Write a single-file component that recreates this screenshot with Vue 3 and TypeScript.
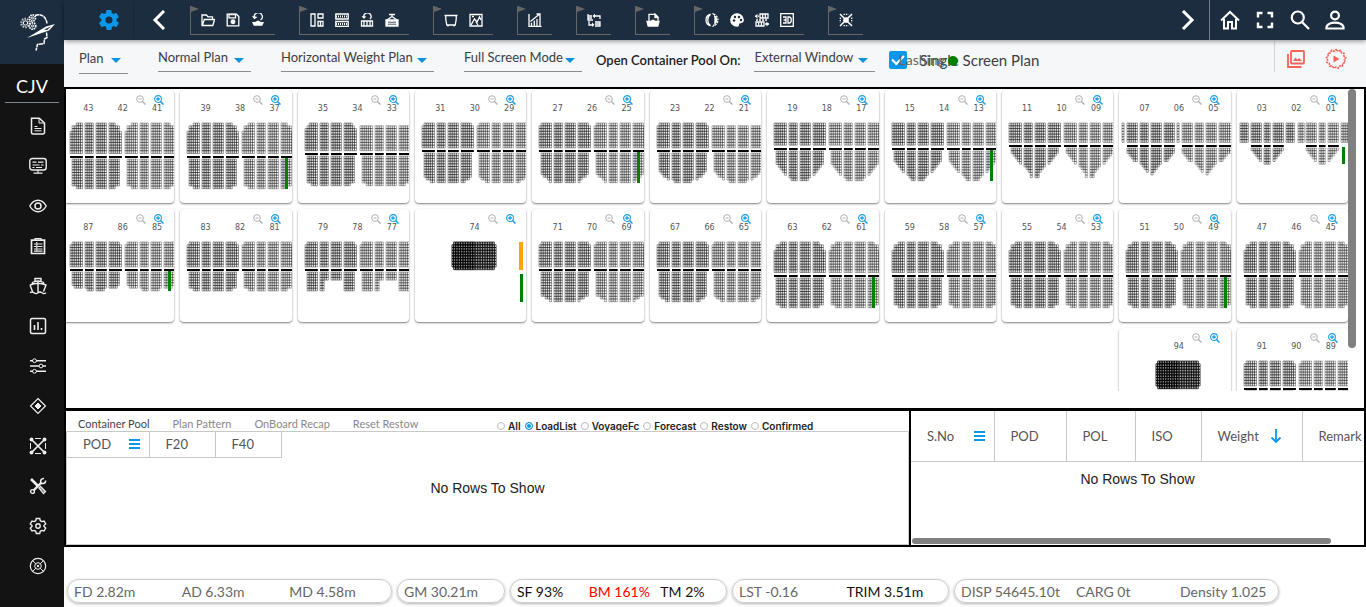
<script setup lang="ts">
import { ref } from 'vue'

const icons: Record<string, string> = {
  folder: '<path d="M1 12.5V2h4.5l1.5 1.8h4.5V6M1.3 12.5 3.3 6.5H13.6L11.8 12.5Z"/>',
  save: '<path d="M1.2 1.2h9.3l2.3 2.3v9.3H1.2Z"/><path d="M3 1.5h6.5v3.3H3Z"/><circle cx="7" cy="8.8" r="1.8" fill="currentColor"/>',
  undoHull: '<path d="M3.5 5A4 4 0 1 1 9.5 7"/><path d="M1 3l2.3 3.3L6.5 4Z" fill="currentColor" stroke="none"/><path d="M1 9h3l3-1.6L10 9h3l-1.8 3.8H2.8Z" fill="currentColor" stroke="none"/>',
  board: '<path d="M1 1h4v12H1ZM8 1h5v4H8ZM8 8.3h5V13H8ZM10.5 8v5"/>',
  rows: '<path d="M.8 1h12.4v5H.8ZM.8 8.5h12.4v5H.8Z"/><path d="M1 3.5h12M1 11h12" stroke-width="2" stroke-dasharray="1 1"/>',
  undoGrid: '<path d="M4 4.5A3.6 3.6 0 1 1 10 6"/><path d="M1.5 3l2.5 3L6.3 3.5Z" fill="currentColor" stroke="none"/><path d="M1.5 8h11v5h-11ZM4 8v5M7 8v5M10 8v5"/>',
  crane: '<path d="M4 1.500h6M7 1.500v3M2 7l5-3.500L12 7"/><path d="M1 7h12v6H1Z" fill="currentColor"/><path d="M3 9.2h8M3 11.2h8" stroke="#1c2d3f" stroke-width=".8"/>',
  tank: '<path d="M.5 2.500h13M1.800 2.500v4l1 5.500h8.400l1-5.500v-4M4 12v1.500M10 12v1.500"/>',
  picture: '<path d="M1 1.5h12v11.5H1Z"/><path d="m2 12 3.500-6L8 9l2.500-5L12 7M3 3.500h2M9 12l-2-3"/>',
  chart: '<path d="M1 1v12.3h12.5M3.5 13V9.8M6.3 13V7.8M9 13V6M12 13V3M2.5 8.5l8.5-7M8.5 1H12v3"/>',
  swap: '<path d="M1 1v6h5M1 3h4M1 5h4M8 3h5v3M8 9h5v4H8M8 11h5M2 8v4h4"/><path d="M8 .8v4.5L5.5 3ZM5 9.5V14l2.5-2.2Z" fill="currentColor" stroke="none"/>',
  shipFile: '<path d="M3 8V1.3h6L12 4v4"/><path d="M9 1v3.5h3Z" fill="currentColor"/><path d="M1 8.5h3l3-1.2 3 1.2h3L11.8 13H2.2Z" fill="currentColor"/>',
  half: '<path d="M5.5 1.2A6 6 0 0 0 5.5 12.8 7.5 7.5 0 0 1 5.5 1.2Z"/><path d="M8.5 1.2a6 6 0 0 1 0 11.6A10 10 0 0 0 8.5 1.2Z" stroke-dasharray="2 1"/><path d="M9.5 2.5a5 5 0 0 1 0 9Z" fill="currentColor" stroke="none"/>',
  palette: '<path d="M7 .8a6.2 6.2 0 1 0 0 12.4c2.5 0 .5-2.3 2-3.2s4.2.2 4.2-3A6.2 6.2 0 0 0 7 .8Z" fill="currentColor"/><g fill="#1c2d3f" stroke="none"><circle cx="4" cy="7.5" r="1.2"/><circle cx="5" cy="4" r="1.2"/><circle cx="9" cy="4" r="1.2"/><circle cx="11" cy="7" r="1.2"/></g>',
  exchange: '<path d="M5 1h8v4H5ZM1 9h8v4H1ZM7.6 1v4M10.3 1v4M3.6 9v4M6.4 9v4" stroke-width="1.3"/><path d="M0 3.2h4M10 11h4M1 7h12" stroke-dasharray="2 1"/><path d="M2.5.7v5L0 3.2ZM11.5 8.5v5L14 11Z" fill="currentColor" stroke="none"/>',
  threeD: '<path d="M.7 .7h12.6v12.6H.7Z"/><path d="M3 4h3v6H3M3.6 7H6M8 4h1.8l1.4 1.5v3L9.8 10H8Z"/>',
  lash: '<path d="m1 1 12 12M13 1 1 13" stroke-width="1.6"/><path d="M4.5 1.3h5M4.5 12.7h5M1.3 4.5v5M12.7 4.5v5" stroke-dasharray="1.4 1"/><circle cx="7" cy="7" r="2.2" fill="currentColor"/>',
  file: '<path d="M2.5 1.2h7.8L15.5 6v9.5a1.5 1.5 0 0 1-1.5 1.5H4a1.5 1.5 0 0 1-1.5-1.5Z" stroke-width="1.5"/><path d="M10 1.5V6h5.3M5.500 9.500h3M5.500 11.500h7M5.500 13.800h7"/>',
  monitor: '<rect x=".8" y="1.5" width="16.4" height="11.5" rx="2.5" stroke-width="1.4"/><path d="M3.5 5.2h4M9 5.2h5.5M3.5 8h7M12 8h2.5M3.5 10.5h2M7 10.5h6M9 13v2.8M4.5 16.2h9" stroke-width="1.2"/>',
  eye: '<path d="M.8 9C3 5 5.8 3.2 9 3.2S15 5 17.2 9C15 13 12.2 14.8 9 14.8S3 13 .8 9Z" stroke-width="1.4"/><circle cx="9" cy="9" r="3" stroke-width="1.5"/>',
  clipboard: '<path d="M2.5 3.2h13V16.5h-13Z" stroke-width="1.7"/><path d="M6 3V1.5h6V3M5 7h2M8.5 7h5M5 9.5h2M8.5 9.5h5M5 12h2M8.5 12h5M5 14.2h2M8.5 14.2h5M7.8 5v10" stroke-width="1.2"/>',
  ship: '<path d="M6 4V1.5h6V4M3.5 7V5.5Q9 2.5 14.5 5.5V7M1 8q8-3.5 16 0l-2.5 6.5M1 8l2.5 6.5M9 4.500V15M1 15.800q2-1.600 4 0t4 0 4 0 4 0" stroke-width="1.4"/>',
  bars: '<rect x="1.5" y="1.5" width="15" height="15" rx="1.5" stroke-width="1.5"/><path d="M5.5 13V8M9 13V5M12.5 13v-2" stroke-width="1.6"/>',
  sliders: '<path d="M1 3.7h3M7 3.7h10M1 9h9M14 9h3M1 14.3h3M7 14.3h10" stroke-width="1.4"/><circle cx="5.5" cy="3.7" r="1.9"/><circle cx="12" cy="9" r="1.9"/><circle cx="5.5" cy="14.3" r="1.9"/>',
  diamond: '<path d="M9 1.5 16.5 9 9 16.5 1.5 9Z" stroke-width="1.2"/><path d="M9 6 12 9 9 12 6 9Z" fill="currentColor"/>',
  cross: '<path d="m3 3 12 12M15 3 3 15" stroke-width="1.7"/><path d="M6 1.5h6M6 16.5h6M1.5 6v6M16.5 6v6"/><g fill="currentColor" stroke="none"><circle cx="2.5" cy="2.5" r="1.9"/><circle cx="15.5" cy="2.5" r="1.9"/><circle cx="2.5" cy="15.5" r="1.9"/><circle cx="15.5" cy="15.5" r="1.9"/></g>',
  tools: '<path d="m2 2 7 7" stroke-width="2.6"/><path d="m4.5 13.5 8-8" stroke-width="2.4"/><path d="M12 6a3 3 0 0 1 3-4.5M12 6a3 3 0 0 0 4.7-2.5" stroke-width="1.6"/><circle cx="3.5" cy="14.5" r="1.9" stroke-width="1.4"/><path d="m10 11 1.5-1.5 5 5L14.5 16.5Z" stroke-width="1.3"/><path d="m11.5 11 4 4"/>',
  cog: '<path d="M7.3 1.5h3.4l.6 2.2 1.5.9 2.2-.6 1.700 2.900L15 8.500v1l1.700 1.600L15 14l-2.200-.6-1.500.9-.6 2.200H7.300l-.6-2.200-1.500-.9L3 14l-1.700-2.900L3 9.500v-1L1.300 6.900 3 4l2.200.6 1.500-.9Z" stroke-width="1.400"/><circle cx="9" cy="9" r="2.2" stroke-width="1.4"/>',
  wheel: '<circle cx="9" cy="9" r="7.7" stroke-width="1.2"/><circle cx="9" cy="9" r="3.3"/><path d="m3.800 3.800 3 3M14.200 3.800l-3 3M3.800 14.200l3-3M14.200 14.200l-3-3M7.700 7.700l2.600 2.600M10.300 7.700l-2.600 2.600"/>',
}

const toolGroups = [
  ['folder', 'save', 'undoHull'],
  ['board', 'rows', 'undoGrid', 'crane'],
  ['tank', 'picture'],
  ['chart'],
  ['swap'],
  ['shipFile'],
  ['half', 'palette', 'exchange', 'threeD'],
  ['lash'],
]
const sideIcons = ['file', 'monitor', 'eye', 'clipboard', 'ship', 'bars', 'sliders', 'diamond', 'cross', 'tools', 'cog', 'wheel']

const selects = [
  { id: 'mode', label: 'Plan', cls: 'w-plan' },
  { id: 'pattern', label: 'Normal Plan', cls: 'w-normal' },
  { id: 'weight', label: 'Horizontal Weight Plan', cls: 'w-weight' },
  { id: 'screen', label: 'Full Screen Mode', cls: 'w-screen' },
]

/* Stowage drawing: groups are [x, columns, has hatch]; depths list hold rows per column from the side inwards. */
type Group = [number, number, boolean]
interface Bay {
  labels: string[]
  deck: number
  cut?: number[]
  depths: number[]
  groups?: Group[][]
  raised?: boolean
  bar?: boolean
  block?: boolean
  orange?: boolean
  start?: boolean
}
const CW = 2.08
const CH = 2.77
const HOLD = 2.7
const TOP = 33

const wide: Group[][] = [
  [[7, 6, true], [22, 4, true], [33, 5, true], [46, 6, true]],
  [[62, 6, true], [77, 4, true], [88, 5, true], [101, 6, true]],
]
const bow: Group[][] = [
  [[3, 1, false], [8, 5, true], [21, 4, true], [32, 5, true], [45, 5, true], [58, 1, false]],
  [[63, 5, true], [76, 4, true], [87, 5, true], [100, 6, true]],
]
const tip: Group[][] = [
  [[3, 4, false], [14, 5, true], [27, 3, true], [36, 5, true], [49, 4, false]],
  [[61, 3, false], [69, 5, true], [82, 3, true], [91, 5, true], [104, 4, false]],
]
const box = [0, 10, 10, 11, 11, 11, 11, 11, 11, 11, 11]
const low = [0, 6, 6, 7, 7, 7, 7, 7, 7, 7, 7]
const big = [3, 1, 1]

const bays: Bay[] = [
  { labels: ['43', '42', '41'], deck: 11, cut: big, depths: box },
  { labels: ['39', '38', '37'], deck: 11, cut: big, depths: box, bar: true },
  { labels: ['35', '34', '33'], deck: 10, cut: [2, 1], depths: box, raised: true },
  { labels: ['31', '30', '29'], deck: 9, cut: [1], depths: [0, 9, 10, 10, 11, 11, 11, 11, 11, 11, 11] },
  { labels: ['27', '26', '25'], deck: 9, cut: [1], depths: [0, 8, 9, 9, 10, 11, 11, 11, 11, 11, 11], bar: true },
  { labels: ['23', '22', '21'], deck: 9, cut: [1], depths: [0, 7, 8, 9, 9, 10, 10, 11, 11, 11, 11], raised: true },
  { labels: ['19', '18', '17'], deck: 8, depths: [0, 5, 6, 7, 8, 9, 10, 11, 11, 11, 11] },
  { labels: ['15', '14', '13'], deck: 8, depths: [0, 4, 5, 6, 7, 8, 9, 10, 11, 11, 11], bar: true },
  { labels: ['11', '10', '09'], deck: 7, depths: [0, 2, 3, 4, 5, 6, 7, 8, 9, 11, 11] },
  { labels: ['07', '06', '05'], deck: 7, groups: bow, depths: [2, 3, 4, 5, 5, 6, 7, 8, 9, 10] },
  { labels: ['03', '02', '01'], deck: 7, groups: tip, depths: [1, 2, 3, 4, 5, 6, 6], bar: true },
  { labels: ['87', '86', '85'], deck: 9, cut: [1], depths: [0, 5, 6, 6, 6, 6, 6, 7, 7, 7, 7], bar: true },
  { labels: ['83', '82', '81'], deck: 9, cut: [1], depths: low },
  { labels: ['79', '78', '77'], deck: 9, cut: [1], depths: [0, 7, 7, 7, 7, 7, 7, 7, 3, 3, 3, 3, 3, 3, 3, 7, 7, 7, 7, 7, 0] },
  { labels: ['74'], deck: 10, depths: [], block: true, orange: true },
  { labels: ['71', '70', '69'], deck: 9, cut: [1], depths: [0, 9, 9, 10, 10, 11, 11, 11, 11, 11, 11] },
  { labels: ['67', '66', '65'], deck: 9, cut: [1], depths: [0, 9, 10, 10, 11, 11, 11, 11, 11, 11, 11] },
  { labels: ['63', '62', '61'], deck: 11, cut: big, depths: box, bar: true },
  { labels: ['59', '58', '57'], deck: 11, cut: big, depths: box },
  { labels: ['55', '54', '53'], deck: 11, cut: big, depths: box },
  { labels: ['51', '50', '49'], deck: 11, cut: big, depths: box, bar: true },
  { labels: ['47', '46', '45'], deck: 11, cut: big, depths: box },
  { labels: ['94'], deck: 10, depths: [], block: true, start: true },
  { labels: ['91', '90', '89'], deck: 9, cut: [1], depths: low },
]

function cell(x: number, y: number, w = CW, h = CH): string {
  return `M${x.toFixed(2)} ${y.toFixed(2)}h${w}v${h}h${-w}z`
}

function drawBay(b: Bay) {
  const paths = ['', '']
  const hatches: { x: number; w: number }[] = []
  if (b.block) {
    for (let side = 0; side < 2; side++) {
      for (let c = 0; c < 13; c++) {
        const edge = side === 0 ? c : 12 - c
        const skip = edge < 1 ? 1 : 0
        for (let r = skip; r < 10 - skip; r++) paths[side] += cell(37 + side * 22 + c * 1.7, TOP + r * CH, 1.7)
      }
    }
    return { paths, hatches, hatchY: 0, barY: 65, barH: 28 }
  }
  const hatchY = Math.round(TOP + b.deck * CH + 2.4)
  const groupSets = b.groups ?? wide
  groupSets.forEach((groups, side) => {
    const mirror = groupSets[0]
    const total = groups.reduce((n, g) => n + g[1], 0)
    const holdTotal = mirror.filter(g => g[2]).reduce((n, g) => n + g[1], 0)
    let i = 0
    let h = 0
    for (const [x, n, hatch] of groups) {
      if (hatch) hatches.push({ x, w: n * CW + 0.4 })
      for (let c = 0; c < n; c++) {
        const edge = Math.min(i, total - 1 - i)
        const skip = side === 1 && b.raised ? 1 : b.cut?.[edge] ?? 0
        for (let r = skip; r < b.deck; r++) paths[side] += cell(x + c * CW, TOP + r * CH)
        if (hatch) {
          const k = b.depths.length > 20 ? h : Math.max(0, Math.min(h, holdTotal - 1 - h))
          const depth = b.depths[Math.min(k, b.depths.length - 1)]
          for (let r = 0; r < depth; r++) paths[side] += cell(x + c * CW, hatchY + 3 + r * HOLD, CW, HOLD)
          h++
        }
        i++
      }
    }
  })
  return { paths, hatches, hatchY, barY: hatchY + 2, barH: Math.round(Math.max(...b.depths) * HOLD) + 1 }
}
const cards = bays.map(b => ({ ...b, art: drawBay(b) }))

const tabs = ['Container Pool', 'Plan Pattern', 'OnBoard Recap', 'Reset Restow']
const filters = ['All', 'LoadList', 'VoyageFc', 'Forecast', 'Restow', 'Confirmed']
const filter = ref('LoadList')
const single = ref(true)

const stats = [
  { cls: 'three', items: [['FD 2.82m', ''], ['AD 6.33m', ''], ['MD 4.58m', '']] },
  { cls: 'one', items: [['GM 30.21m', '']] },
  { cls: 'tight', items: [['SF 93%', 'dark'], ['BM 161%', 'red'], ['TM 2%', 'dark']] },
  { cls: 'two', items: [['LST -0.16', ''], ['TRIM 3.51m', 'dark']] },
  { cls: 'last', items: [['DISP 54645.10t', ''], ['CARG 0t', ''], ['Density 1.025', '']] },
]
</script>

<template>
  <div class="app">
    <aside class="side">
      <div class="logo">
        <svg width="38" height="40" viewBox="0 0 38 40" fill="none" stroke="#fff" aria-hidden="true">
          <circle cx="6.500" cy="11" r="4.200" stroke="#bbb" stroke-width="2.200" stroke-dasharray="1.600 1" />
          <circle cx="6.500" cy="11" r="2.200" />
          <circle cx="13.500" cy="6" r="3" stroke-width="1.800" stroke-dasharray="1.500 .8" />
          <circle cx="13.500" cy="14" r="3.200" stroke-width="1.800" stroke-dasharray="1.500 .8" />
          <circle cx="13.500" cy="6" r="1" /><circle cx="13.500" cy="14" r="1" />
          <path d="M16 3.500c6-2.500 11 1 12 8M27.500 20.500l.5 5-2.500 1.500-.5 4.500-6.500 1-1.500 6" stroke-width="1.500" stroke-dasharray="4 .5" />
          <path d="M8 26 27 14.500l9-2.500-6 6.500Z" fill="#fff" stroke="none" />
          <path d="M25 17.500l7-3-4 3.500Z" fill="#1c2d3f" stroke="none" />
        </svg>
      </div>
      <h1>CJV</h1>
      <nav>
        <button v-for="n in sideIcons" :key="n" type="button" :aria-label="n">
          <svg width="18" height="18" viewBox="0 0 18 18" fill="none" stroke="currentColor" v-html="icons[n]"></svg>
        </button>
      </nav>
    </aside>

    <main>
      <header>
        <button class="gear" type="button" aria-label="Settings">
          <svg width="24" height="24" viewBox="0 0 24 24" fill="currentColor"><path d="M19.400 13c.1-.3.100-.7.100-1s0-.7-.1-1l2.100-1.600c.2-.2.300-.4.100-.7l-2-3.400c-.1-.2-.4-.3-.6-.2l-2.500 1a7 7 0 0 0-1.700-1l-.4-2.600c0-.3-.2-.5-.5-.5h-4c-.2 0-.5.2-.5.400l-.4 2.700a7 7 0 0 0-1.700 1l-2.500-1c-.2-.1-.5 0-.6.2l-2 3.400c-.1.2 0 .5.100.700L4.500 11a8 8 0 0 0 0 2l-2.100 1.600c-.2.200-.2.400-.1.700l2 3.400c.1.200.400.3.600.2l2.500-1c.5.4 1.100.7 1.700 1l.4 2.600c0 .300.2.500.5.500h4c.200 0 .5-.2.500-.4l.4-2.700a7 7 0 0 0 1.700-1l2.500 1c.2.100.5 0 .6-.2l2-3.400c.1-.2.1-.5-.1-.7ZM12 15.500a3.500 3.500 0 1 1 0-7 3.500 3.500 0 0 1 0 7Z" /></svg>
        </button>
        <button class="prev" type="button" aria-label="Previous">
          <svg width="14" height="20" viewBox="0 0 14 20" fill="none" stroke="currentColor" stroke-width="3"><path d="M12 1 3 10l9 9" /></svg>
        </button>
        <div class="tools">
          <div v-for="(g, i) in toolGroups" :key="i" class="group">
            <button v-for="n in g" :key="n" type="button" :aria-label="n">
              <svg width="14" height="14" viewBox="0 0 14 14" fill="none" stroke="currentColor" stroke-width="1.300" v-html="icons[n]"></svg>
            </button>
          </div>
        </div>
        <button class="next" type="button" aria-label="Next">
          <svg width="14" height="20" viewBox="0 0 14 20" fill="none" stroke="currentColor" stroke-width="3"><path d="m2 1 9 9-9 9" /></svg>
        </button>
        <div class="account">
          <button type="button" aria-label="Home"><svg width="20" height="20" viewBox="0 0 20 20" fill="none" stroke="currentColor" stroke-width="2"><path d="M1 10.500 10 2l9 8.500M4 9v9.500h4V12h4v6.500h4V9" /></svg></button>
          <button type="button" aria-label="Full screen"><svg width="20" height="20" viewBox="0 0 20 20" fill="none" stroke="currentColor" stroke-width="2.400"><path d="M3 7.500V3h4.500M12.500 3H17v4.500M17 12.500V17h-4.500M7.500 17H3v-4.500" /></svg></button>
          <button type="button" aria-label="Search"><svg width="20" height="20" viewBox="0 0 20 20" fill="none" stroke="currentColor" stroke-width="2.200"><circle cx="7.800" cy="7.500" r="6" /><path d="m12 12 7 7" /></svg></button>
          <button type="button" aria-label="User"><svg width="20" height="20" viewBox="0 0 20 20" fill="none" stroke="currentColor" stroke-width="2.200"><circle cx="10" cy="5.500" r="3.900" /><path d="M1.500 18.500v-1.800q2-4 8.500-4t8.500 4v1.800Z" /></svg></button>
        </div>
      </header>

      <section class="options">
        <div class="selects">
          <div v-for="s in selects" :key="s.id" class="pick" :class="s.cls">
            <select :id="s.id" :aria-label="s.label"><option>{{ s.label }}</option></select>
          </div>
        </div>
        <label class="pool-on" for="pool">Open Container Pool On:</label>
        <div class="pick w-window">
          <select id="pool"><option>External Window</option></select>
        </div>
        <label class="check">
          <input v-model="single" type="checkbox">
          <span class="single">Single Screen Plan</span>
          <span class="lashing">Lashing<i></i></span>
        </label>
        <div class="actions">
          <button type="button" aria-label="Gallery"><svg width="20" height="20" viewBox="0 0 20 20" fill="none" stroke="currentColor" stroke-width="1.800"><rect x="5" y="2" width="13" height="12.500" rx="1" /><path d="M2 5v13h13.500" /><path d="m7 12 2.500-3.500 2 2.300L13 9l3 3Z" fill="currentColor" stroke="none" /></svg></button>
          <button type="button" aria-label="Run"><svg width="22" height="22" viewBox="0 0 22 22" fill="none" stroke="currentColor"><path d="M11 1.500 13 3.300l2.500-1 1 2.500 2.600.5-.3 2.700 2 1.700-1.500 2.100.9 2.500-2.500 1.100-.3 2.700-2.700-.1-1.500 2.200L11 19l-2.200 1.200-1.500-2.200-2.700.1-.3-2.700-2.500-1.100.9-2.500L1.200 9.700l2-1.700-.3-2.700 2.600-.5 1-2.500 2.500 1Z" stroke-width="1.500" stroke-dasharray="2.400 .7" /><path d="m8.500 7.500 6 3.500-6 3.500Z" fill="currentColor" stroke="none" /></svg></button>
        </div>
      </section>

      <section class="plan">
        <div class="scroller">
          <div class="grid">
            <article v-for="c in cards" :key="c.labels[0]" class="card" :class="{ start: c.start }">
              <div class="zoom">
                <button type="button" aria-label="Zoom out"><svg width="10" height="10" viewBox="0 0 12 12" fill="none" stroke="#b0b0b0" stroke-width="1.200"><circle cx="4.800" cy="4.800" r="4" /><path d="M3 4.800h3.600" /><path d="m7.800 7.800 3.600 3.600" stroke-width="1.600" /></svg></button>
                <button type="button" aria-label="Zoom in"><svg width="10" height="10" viewBox="0 0 12 12" fill="none" stroke="#1a9fe6" stroke-width="1.300"><circle cx="4.800" cy="4.800" r="4.100" /><path d="M2.600 4.800H7M4.800 2.600V7" stroke-width="1.700" /><path d="m7.800 7.800 3.600 3.600" stroke-width="1.900" /></svg></button>
              </div>
              <div class="nums" :class="{ lone: c.block }"><span v-for="l in c.labels" :key="l">{{ l }}</span></div>
              <svg class="art" width="112" height="113" viewBox="0 0 112 113" fill="none" aria-hidden="true">
                <path :d="c.art.paths[0]" class="cells" :class="{ dense: c.block }" />
                <path :d="c.art.paths[1]" class="cells light" :class="{ dense: c.block }" />
                <rect v-for="(h, i) in c.art.hatches" :key="i" :x="h.x" :y="c.art.hatchY" :width="h.w" height="2" fill="#000" />
                <rect v-if="c.orange" x="104" y="33" width="4" height="28" fill="#ffa500" />
                <rect v-if="c.bar || c.orange" x="105" :y="c.art.barY" width="3" :height="c.art.barH" fill="#008000" />
              </svg>
            </article>
          </div>
        </div>
        <div class="track"></div>
      </section>

      <section class="panels">
        <div class="pool">
          <div class="pool-head">
            <div class="tabs">
              <button v-for="(t, i) in tabs" :key="t" type="button" :class="{ on: i === 0 }">{{ t }}</button>
            </div>
            <div class="filters">
              <label v-for="f in filters" :key="f"><input v-model="filter" type="radio" name="filter" :value="f">{{ f }}</label>
            </div>
          </div>
          <div class="pool-body">
            <table>
              <thead><tr>
                <th class="c-pod"><div>POD<i class="menu"></i></div></th><th>F20</th><th>F40</th>
              </tr></thead>
            </table>
            <p class="empty">No Rows To Show</p>
          </div>
        </div>
        <div class="list">
          <div class="list-scroll">
            <table>
              <thead><tr>
                <th class="c-no"><div>S.No<i class="menu"></i></div></th>
                <th class="c-72">POD</th>
                <th class="c-69">POL</th>
                <th class="c-66">ISO</th>
                <th class="c-weight"><div>Weight<svg width="12" height="16" viewBox="0 0 12 16" fill="none" stroke="#0b98e8" stroke-width="1.800"><path d="M6 1v13M1.500 9.500 6 14l4.500-4.500" /></svg></div></th>
                <th class="c-remark">Remark</th>
              </tr></thead>
            </table>
          </div>
          <p class="empty">No Rows To Show</p>
          <div class="hthumb"></div>
        </div>
      </section>

      <footer>
        <div v-for="(s, i) in stats" :key="i" class="pill" :class="s.cls">
          <span v-for="it in s.items" :key="it[0]" :class="it[1]">{{ it[0] }}</span>
        </div>
      </footer>
    </main>
  </div>
</template>

<style>
body { margin: 0; overflow: hidden; }
</style>

<style scoped>
.app { display: flex; min-height: 100vh; background: #fff; font-family: Lato, "Open Sans", sans-serif; font-size: 14px; color: #555; }
button { padding: 0; border: 0; background: none; color: inherit; font: inherit; display: flex; align-items: center; justify-content: center; cursor: pointer; }
svg { display: block; flex: none; }

.side { width: 64px; flex: none; background: #131313; color: #fff; }
.logo { height: 64px; background: #1c2d3f; display: flex; align-items: center; justify-content: center; padding-left: 12px; box-sizing: border-box; }
h1 { margin: 0 5px; height: 38px; line-height: 44px; border-bottom: 1px solid #79838c; font-size: 18px; font-weight: 400; text-align: center; }
nav { padding: 3px 0 0 12px; display: flex; flex-direction: column; align-items: center; }
nav button { height: 40px; width: 40px; color: #eee; }

main { flex: 1; min-width: 0; display: flex; flex-direction: column; }
header { height: 40px; flex: none; display: flex; align-items: center; background: #1c2d3f; color: #fff; position: relative; box-shadow: 0 1px 5px rgba(0, 0, 0, .45); }
.gear { width: 70px; height: 34px; padding-left: 20px; box-sizing: border-box; color: #0b98e8; border-right: 1px solid #172534; }
.prev { width: 50px; height: 40px; }
.tools { flex: 1; display: flex; gap: 24px; padding-left: 6px; }
.group { display: flex; height: 26px; padding: 2px 5px 0 4px; border-left: 1px solid #666; border-bottom: 1px solid #666; position: relative; }
.group::before { content: ""; position: absolute; left: 0; top: 0; border-left: 8px solid #666; border-top: 3px solid transparent; border-bottom: 3px solid transparent; }
.group button { width: 25px; height: 24px; }
.next { width: 43px; height: 40px; }
.account { display: flex; align-items: center; height: 40px; border-left: 1px solid #747f8a; padding: 0 14px 0 2px; }
.account button { width: 35px; height: 40px; }

.options { height: 47px; flex: none; background: #f6f7f9; display: flex; align-items: flex-start; padding: 7px 19px 0 15px; box-sizing: border-box; gap: 14px; color: #3c4043; font-size: 13px; }
.selects { display: flex; gap: 30px; }
.pick { height: 25px; border-bottom: 1px solid #8c8c8c; position: relative; box-sizing: border-box; }
.pick::after { content: ""; position: absolute; right: 7px; top: 11px; border: 5px solid transparent; border-top-color: #0b93dd; border-bottom: 0; pointer-events: none; }
.pick select { appearance: none; width: 100%; height: 21px; border: 0; padding: 0; background: transparent; color: inherit; font: inherit; line-height: 21px; outline: 0; display: block; }
.w-plan { width: 49px; height: 27px; padding-top: 1px; }
.w-normal { width: 93px; }
.w-weight { width: 153px; }
.w-screen { width: 118px; }
.w-window { width: 121px; }
.pool-on { line-height: 26px; color: #222; font-weight: 600; }
.check { display: flex; position: relative; font-size: 15px; line-height: 26px; gap: 12px; white-space: nowrap; }
.check input { appearance: none; margin: 4px 0 0; width: 18px; height: 18px; border-radius: 2px; background: #0b98e8; display: flex; align-items: center; justify-content: center; }
.check input:checked::before { content: ""; width: 10px; height: 5px; margin-top: -4px; border: 2px solid #fff; border-top: 0; border-right: 0; transform: rotate(-45deg); }
.lashing { position: absolute; left: 9px; top: 0; font-size: 14px; color: #666; }
.lashing i { position: absolute; left: 50px; top: 9px; width: 10px; height: 10px; border-radius: 50%; background: #008000; }
.actions { margin: -6px 0 0 auto; height: 31px; display: flex; gap: 19px; align-items: center; padding: 4px 0 0 11px; box-sizing: border-box; border-left: 1px solid #d4d6d8; color: #f56258; }

.plan { flex: 1; min-height: 0; display: flex; border: 2px solid #000; border-bottom-width: 1px; box-sizing: border-box; background: #fff; }
.scroller { flex: 1; min-width: 0; height: 302px; overflow: auto; scrollbar-width: none; }
.grid { display: grid; grid-template-columns: repeat(11, minmax(0, 1fr)); gap: 6px; margin-left: -3px; padding-top: 1px; }
.card { position: relative; height: 113px; box-sizing: border-box; border-radius: 4px; background: #fff; box-shadow: 0 1px 2px rgba(0, 0, 0, .5); overflow: hidden; }
.card.start { grid-column-start: 10; }
.zoom { display: flex; gap: 8px; padding: 5px 0 0 73px; height: 10px; position: relative; z-index: 1; }
.nums { display: flex; padding-left: 8px; line-height: 10px; margin-top: -1px; font-family: "DejaVu Sans", sans-serif; font-size: 8px; }
.nums span { width: 35px; text-align: center; }
.nums.lone { padding-left: 42px; }
.art { position: absolute; left: 0; top: 0; }
.cells { stroke: #000; stroke-width: .38; }
.cells.light { stroke-width: .32; }
.cells.dense { stroke-width: .85; }
.cells.light.dense { stroke-width: .65; }
.track { width: 16px; flex: none; }
.track::before { content: ""; display: block; width: 8px; height: 259px; border-radius: 4px; background: #808080; }

.panels { height: 138px; flex: none; display: flex; border: 2px solid #000; box-sizing: border-box; }
.pool { flex: 843; min-width: 0; display: flex; flex-direction: column; }
.pool-head { height: 20px; display: flex; position: relative; align-items: flex-end; }
.tabs { display: flex; gap: 23px; padding-left: 12px; font-size: 11px; line-height: 14px; color: #888; }
.tabs .on { color: #444; }
.filters { position: absolute; left: 431px; top: 8px; display: flex; gap: 4px; font-family: Inter, sans-serif; font-size: 10px; font-weight: 600; line-height: 14px; color: #222; }
.filters label { display: flex; align-items: center; gap: 3px; }
.filters input { appearance: none; width: 8px; height: 8px; margin: 0; border: 1px solid #bbb; border-radius: 50%; background: #fff; }
.filters input:checked { border-color: #0b98e8; background: #0b98e8; box-shadow: inset 0 0 0 1px #fff; }
.pool-body { flex: 1; border: 1px solid #c9c9c9; position: relative; }
table { border-collapse: collapse; table-layout: fixed; color: #555; font-size: 13px; }
th { padding: 0 0 0 16px; font-weight: 400; text-align: left; box-sizing: border-box; border-right: 1px solid #c9c9c9; border-bottom: 1px solid #c9c9c9; }
th div { display: flex; align-items: center; justify-content: space-between; padding-right: 9px; }
.pool table { width: 214px; }
.pool th { height: 25px; width: 66px; }
.pool .c-pod { width: 82px; }
.menu { width: 11px; height: 2px; background: #0b98e8; box-shadow: 0 -4px #0b98e8, 0 4px #0b98e8; }
.empty { margin: 0; text-align: center; font-family: "Liberation Sans", Arial, sans-serif; font-size: 14px; line-height: 18px; color: #222; }
.pool .empty { padding-top: 21px; }
.list { flex: 453; min-width: 0; border-left: 2px solid #000; display: flex; flex-direction: column; overflow: hidden; }
.list-scroll { overflow: hidden; }
.list table { width: 490px; }
.list th { height: 50px; }
.c-no { width: 83px; }
.c-72 { width: 72px; }
.c-69 { width: 69px; }
.c-66 { width: 66px; }
.list .c-weight { width: 101px; }
.c-weight div { padding-right: 20px; }
.list .empty { padding-top: 8px; }
.hthumb { margin: auto 33px 1px 1px; height: 6px; border-radius: 3px; background: #808080; }

footer { height: 60px; flex: none; display: flex; gap: 5px; padding: 32px 3px 4px; box-sizing: border-box; }
.pill { height: 24px; box-sizing: border-box; display: grid; align-items: center; grid-auto-flow: column; grid-auto-columns: 1fr; border: 1px solid #ccc; border-radius: 12px; box-shadow: 0 1px 3px rgba(0, 0, 0, .3); white-space: nowrap; color: #666; }
.pill span { padding-left: 6px; }
.pill .dark { color: #111; }
.pill .red { color: #f00; }
.three { width: 325px; }
.one { width: 108px; }
.tight, .two { width: 217px; }
.last { width: 325px; grid-template-columns: 115px 1fr 1fr; }
</style>
